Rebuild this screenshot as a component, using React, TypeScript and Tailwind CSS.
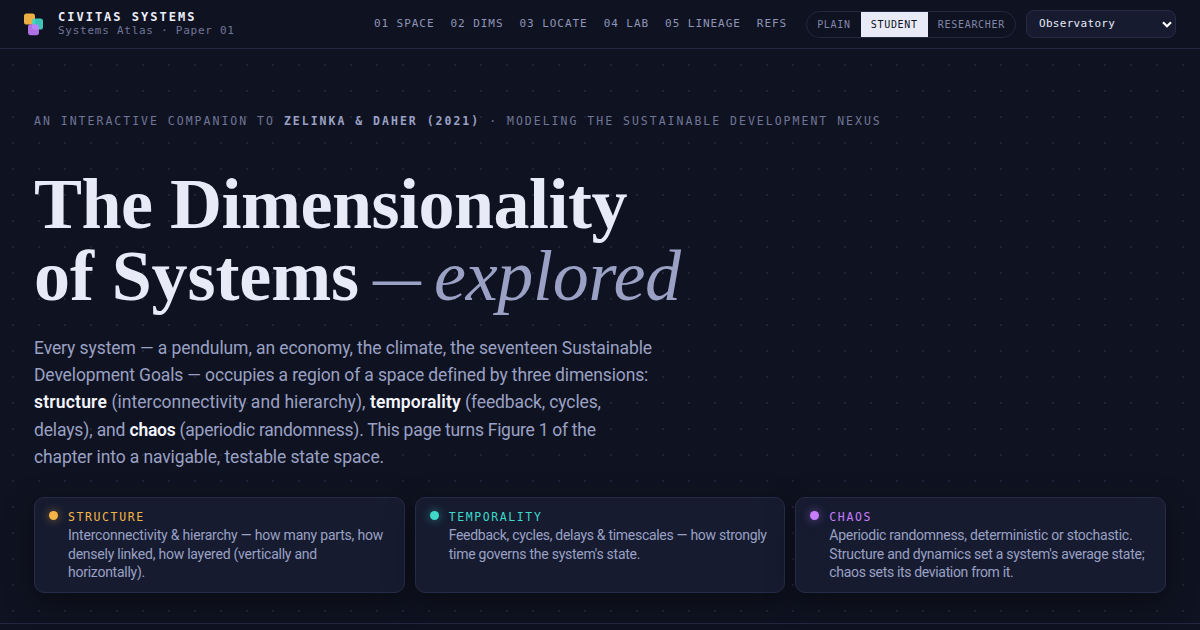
import React, { useState } from 'react';

const navLinks = ['01 SPACE', '02 DIMS', '03 LOCATE', '04 LAB', '05 LINEAGE', 'REFS'];

const levels = ['PLAIN', 'STUDENT', 'RESEARCHER'];

interface Line {
  text: string;
  tracking: string;
}

interface Dimension {
  name: string;
  dot: string;
  label: string;
  lines: Line[];
}

const dimensions: Dimension[] = [
  {
    name: 'STRUCTURE',
    dot: 'bg-[#f5b544] shadow-[0_0_10px_rgba(245,181,68,0.55)]',
    label: 'text-[#f5b544]',
    lines: [
      { text: 'Interconnectivity & hierarchy — how many parts, how', tracking: 'tracking-[-0.21px]' },
      { text: 'densely linked, how layered (vertically and', tracking: 'tracking-[-0.239px]' },
      { text: 'horizontally).', tracking: 'tracking-[-0.256px]' },
    ],
  },
  {
    name: 'TEMPORALITY',
    dot: 'bg-[#3fd9c9] shadow-[0_0_10px_rgba(63,217,201,0.55)]',
    label: 'text-[#3fd9c9]',
    lines: [
      { text: 'Feedback, cycles, delays & timescales — how strongly', tracking: 'tracking-[-0.292px]' },
      { text: "time governs the system's state.", tracking: 'tracking-[-0.257px]' },
    ],
  },
  {
    name: 'CHAOS',
    dot: 'bg-[#c77dff] shadow-[0_0_10px_rgba(199,125,255,0.55)]',
    label: 'text-[#c77dff]',
    lines: [
      { text: 'Aperiodic randomness, deterministic or stochastic.', tracking: 'tracking-[-0.262px]' },
      { text: "Structure and dynamics set a system's average state;", tracking: 'tracking-[-0.263px]' },
      { text: 'chaos sets its deviation from it.', tracking: 'tracking-[-0.334px]' },
    ],
  },
];

const Logo: React.FC = () => (
  <svg width="20" height="23" viewBox="0 0 20 23" fill="none">
    <rect x="0" y="0.5" width="11" height="11" rx="2.6" fill="#f5b544" opacity="0.97" />
    <rect x="8" y="5.5" width="11" height="11" rx="2.6" fill="#3fd9c9" opacity="0.9" />
    <rect x="4" y="11.2" width="11" height="11" rx="2.6" fill="#c77dff" opacity="0.88" />
  </svg>
);

const Header: React.FC = () => {
  const [level, setLevel] = useState('STUDENT');

  return (
    <header className="flex h-[49px] items-center justify-between border-b border-[#23273f] bg-[#0f1220] px-6 font-['DejaVu_Sans_Mono',monospace]">
      <div className="flex items-center gap-[14px]">
        <Logo />
        <div className="whitespace-nowrap">
          <div className="text-[12px] leading-[14px] font-bold tracking-[2px] text-[#eceefb]">CIVITAS SYSTEMS</div>
          <div className="text-[11px] leading-[14px] tracking-[0.74px] text-[#6f7698]">Systems Atlas · Paper 01</div>
        </div>
      </div>

      <div className="flex items-center">
        <nav className="mr-[19px] flex gap-4 text-[11px] tracking-[0.95px] whitespace-nowrap text-[#8e95b8]">
          {navLinks.map(link => (
            <a key={link} href="#">{link}</a>
          ))}
        </nav>

        <div className="mr-[10px] flex h-[27px] overflow-hidden rounded-full border border-[#23273f]">
          {levels.map(item => (
            <button
              key={item}
              onClick={() => setLevel(item)}
              className={
                item === level
                  ? 'bg-[#e8eaf8] px-[10px] text-[10px] tracking-[0.7px] text-[#0f1220]'
                  : 'px-[10px] text-[10px] tracking-[0.7px] text-[#8087aa]'
              }
            >
              {item}
            </button>
          ))}
        </div>

        <div className="relative">
          <select className="block h-7 w-[150px] appearance-none rounded-lg border border-[#262c48] bg-[#161b30] pl-3 text-[11px] tracking-[0.3px] text-[#e8eaf8]">
            <option>Observatory</option>
          </select>
          <svg className="pointer-events-none absolute top-[11px] right-1" width="10" height="7" viewBox="0 0 10 7" fill="none">
            <path d="M1 1.2 L5 5.2 L9 1.2" stroke="#ffffff" strokeWidth="2.2" />
          </svg>
        </div>
      </div>
    </header>
  );
};

const DimensionCard: React.FC<{ dimension: Dimension }> = ({ dimension }) => (
  <div className="flex h-24 gap-[10px] rounded-[10px] border border-[#262c48] bg-[#161b30] px-[14px] py-[10px] shadow-[0_8px_30px_rgba(0,0,0,0.35)]">
    <span className={`mt-[3px] h-[9px] w-[9px] shrink-0 rounded-full ${dimension.dot}`} />
    <div className="text-[14px] leading-[18.5px] whitespace-nowrap text-[#9aa1c4]">
      <div className={`font-['DejaVu_Sans_Mono',monospace] text-[11.5px] leading-[18px] tracking-[1.6px] ${dimension.label}`}>
        {dimension.name}
      </div>
      {dimension.lines.map(line => (
        <div key={line.text} className={line.tracking}>{line.text}</div>
      ))}
    </div>
  </div>
);

const Hero: React.FC = () => (
  <section className="h-[575px] border-b border-[#23273f] px-[34px] pt-[63px]">
    <p className="h-[18px] font-['DejaVu_Sans_Mono',monospace] text-[11.5px] leading-[18px] tracking-[2px] whitespace-nowrap text-[#6f7698]">
      AN INTERACTIVE COMPANION TO{' '}
      <strong className="font-bold text-[#9aa1c4]">ZELINKA &amp; DAHER (2021)</strong>
      {' '}· MODELING THE SUSTAINABLE DEVELOPMENT NEXUS
    </p>

    <h1 className="mt-[38px] font-['Liberation_Serif',serif] text-[72px] leading-[72px] font-bold whitespace-nowrap text-[#e8eaf8]">
      <div className="tracking-[-0.5px]">The Dimensionality</div>
      <div className="flex">
        <span className="tracking-[-0.1px]">of Systems</span>
        <em className="ml-[14px] flex font-normal text-[#9aa1c4]">
          <span className="w-[61px] origin-left scale-x-75">—</span>
          <span className="tracking-[-0.3px]">explored</span>
        </em>
      </div>
    </h1>

    <div className="mt-[23px] text-[17.5px] leading-[27.2px] whitespace-nowrap text-[#9aa1c4]">
      <div className="tracking-[-0.085px]">Every system — a pendulum, an economy, the climate, the seventeen Sustainable</div>
      <div className="tracking-[-0.134px]">Development Goals — occupies a region of a space defined by three dimensions:</div>
      <div className="tracking-[0.04px]">
        <strong className="font-semibold tracking-[0.2px] text-[#f4f5ff]">structure</strong> (interconnectivity and hierarchy),{' '}
        <strong className="font-semibold tracking-[0.15px] text-[#f4f5ff]">temporality</strong>
        <span className="tracking-[-0.12px]"> (feedback, cycles,</span>
      </div>
      <div className="tracking-[-0.27px]">
        <span className="tracking-[-0.146px]">delays), and </span>
        <strong className="font-semibold tracking-[-0.23px] text-[#f4f5ff]">chaos</strong> (aperiodic randomness). This page turns Figure 1 of the
      </div>
      <div className="tracking-[-0.113px]">chapter into a navigable, testable state space.</div>
    </div>

    <div className="mt-[26px] grid grid-cols-3 gap-[10px]">
      {dimensions.map(dimension => (
        <DimensionCard key={dimension.name} dimension={dimension} />
      ))}
    </div>
  </section>
);

export default function App() {
  return (
    <div className="h-[630px] overflow-hidden bg-[#0f1220] bg-[radial-gradient(circle_at_center,#1f2338_1px,transparent_1.4px)] bg-[size:26px_26px] font-[Roboto,sans-serif]">
      <Header />
      <Hero />
    </div>
  );
}
